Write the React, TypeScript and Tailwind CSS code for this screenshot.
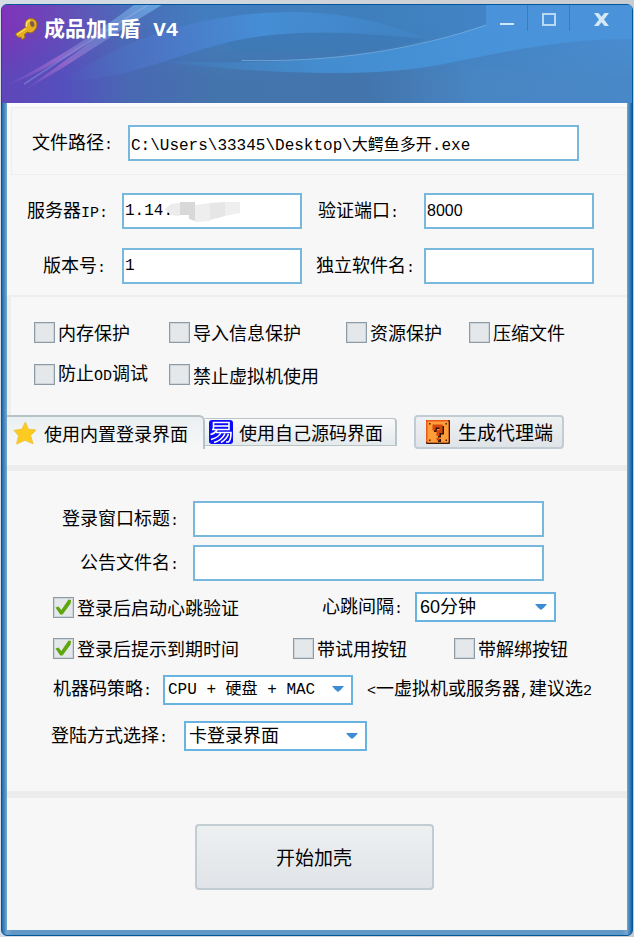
import { useState } from 'react';
import type { ReactNode } from 'react';
import clsx from 'clsx';

// Latin characters sit on a half-width cell next to the 18px Chinese glyphs
function Half({ children }: { children: ReactNode }) {
  return <span className="font-['Liberation_Mono',monospace] text-[15px]">{children}</span>;
}

interface CheckProps {
  children: ReactNode;
  defaultChecked?: boolean;
}

function Check({ children, defaultChecked = false }: CheckProps) {
  const [checked, setChecked] = useState(defaultChecked);
  return (
    <label className="flex items-center gap-[3px] whitespace-nowrap">
      <span className="relative flex shrink-0">
        <input
          type="checkbox"
          checked={checked}
          onChange={(e) => setChecked(e.target.checked)}
          className="size-[21px] appearance-none border border-[#8d9ba6] bg-[#e4e8eb] shadow-[inset_0_0_0_1px_#cdd5db]"
        />
        {checked && (
          <svg viewBox="0 0 21 21" className="pointer-events-none absolute inset-0 size-[21px]">
            <path d="M2.5 10.5 L5.5 9.5 L8.3 13 L15.5 2.5 L18 3 L17.6 6.6 L9.6 17.6 L7.2 17.6 Z" fill="#5fa50d" />
          </svg>
        )}
      </span>
      <span>{children}</span>
    </label>
  );
}

interface FieldProps {
  id: string;
  defaultValue?: string;
  sans?: boolean;
}

function Field({ id, defaultValue, sans }: FieldProps) {
  return (
    <input
      id={id}
      type="text"
      defaultValue={defaultValue}
      className={clsx(
        'h-9 w-full min-w-0 border-2 border-[#79b8dd] bg-white px-px text-base outline-none',
        sans
          ? "font-['Liberation_Sans','Noto_Sans_CJK_SC',sans-serif]"
          : "font-['Liberation_Mono','Noto_Sans_CJK_SC',monospace]",
      )}
    />
  );
}

interface PickerProps {
  id: string;
  options: string[];
  width: string;
  font?: string;
}

function Picker({ id, options, width, font = "font-['Liberation_Sans','Noto_Sans_CJK_SC',sans-serif] text-lg" }: PickerProps) {
  return (
    <div className={clsx('relative', width)}>
      <select
        id={id}
        className={clsx('h-[30px] w-full appearance-none border-2 border-[#68b3df] bg-white pl-[3px] leading-6 outline-none', font)}
      >
        {options.map((option) => (
          <option key={option}>{option}</option>
        ))}
      </select>
      <svg viewBox="0 0 12 6" className="pointer-events-none absolute top-3 right-[9px] h-[6px] w-3">
        <path d="M0 0 H12 L9 3.5 L6 6 L3 3.5 Z" fill="#3d8bd3" />
      </svg>
    </div>
  );
}

function HeaderArt() {
  return (
    <svg viewBox="0 0 631 99" preserveAspectRatio="none" className="absolute inset-0 size-full">
      <defs>
        <linearGradient id="base" x1="0" y1="0" x2="1" y2="0">
          <stop offset="0" stopColor="#8034ba" />
          <stop offset="0.08" stopColor="#6a48b8" />
          <stop offset="0.19" stopColor="#4d6ab8" />
          <stop offset="0.32" stopColor="#427dbf" />
          <stop offset="0.6" stopColor="#3f7fbd" />
          <stop offset="0.8" stopColor="#4385c8" />
          <stop offset="1" stopColor="#4a8fd3" />
        </linearGradient>
        <linearGradient id="low" x1="0" y1="0" x2="1" y2="0">
          <stop offset="0" stopColor="#5f46b9" />
          <stop offset="0.1" stopColor="#5450bd" />
          <stop offset="0.2" stopColor="#4968b3" />
          <stop offset="0.34" stopColor="#4474ac" />
          <stop offset="0.58" stopColor="#4375ac" />
          <stop offset="0.75" stopColor="#4885c3" />
          <stop offset="1" stopColor="#4988c8" />
        </linearGradient>
        <linearGradient id="fade" x1="0" y1="0" x2="0" y2="1">
          <stop offset="0.2" stopColor="#fff" stopOpacity="0" />
          <stop offset="0.75" stopColor="#fff" />
        </linearGradient>
        <mask id="lowMask">
          <rect width="631" height="99" fill="url(#fade)" />
        </mask>
        <linearGradient id="wing" x1="0" y1="0" x2="1" y2="0">
          <stop offset="0" stopColor="#4d6cc6" stopOpacity="0" />
          <stop offset="0.25" stopColor="#4d76c8" stopOpacity="0.8" />
          <stop offset="0.55" stopColor="#4690d8" stopOpacity="0.9" />
          <stop offset="1" stopColor="#4187c9" stopOpacity="0.5" />
        </linearGradient>
        <linearGradient id="wave" x1="0" y1="0" x2="1" y2="0">
          <stop offset="0" stopColor="#438fd2" stopOpacity="0" />
          <stop offset="0.35" stopColor="#438fd2" stopOpacity="0.9" />
          <stop offset="0.75" stopColor="#4893da" />
          <stop offset="1" stopColor="#4a93da" />
        </linearGradient>
        <linearGradient id="ray" x1="0" y1="1" x2="1" y2="0">
          <stop offset="0" stopColor="#a668cf" stopOpacity="0" />
          <stop offset="0.35" stopColor="#a56fd0" stopOpacity="0.7" />
          <stop offset="0.6" stopColor="#7b8fd6" stopOpacity="0.6" />
          <stop offset="1" stopColor="#66a8e0" stopOpacity="0.9" />
        </linearGradient>
      </defs>
      <rect width="631" height="99" fill="url(#base)" />
      <rect width="631" height="99" fill="url(#low)" mask="url(#lowMask)" />
      <path d="M60 78 C110 40 190 8 290 7 C340 7 380 16 425 34 C360 28 290 22 225 38 C170 52 130 74 60 78 Z" fill="url(#wing)" />
      <path d="M225 38 C290 22 360 30 425 34 C370 50 300 54 235 46 Z" fill="#3c79b5" opacity="0.6" />
      <path d="M150 56 C230 60 380 62 486 19 V0 H631 V34 C560 34 500 48 440 60 C370 74 260 70 150 56 Z" fill="url(#wave)" />
      <path d="M240 56 C330 58 410 46 486 20" fill="none" stroke="#7ab5e6" strokeWidth="1" opacity="0.7" />
      <path d="M0 83 C50 58 95 28 132 0 H160 C110 30 70 60 22 86 C50 66 80 44 100 28 C70 50 40 68 0 83 Z" fill="url(#ray)" />
      <path d="M22 80 C70 48 110 22 146 0" fill="none" stroke="#a9b6ea" strokeWidth="1.5" opacity="0.35" />
    </svg>
  );
}

function KeyIcon() {
  return (
    <svg viewBox="0 0 24 24" className="size-6">
      <path
        d="M12 3 C15 0.5 20 1.5 21.5 5 C23 9 20.5 14 17 15.5 C15 16.3 13.5 15.5 12.5 15 L9.5 17.5 L10 20.5 L7.5 22.5 L5.5 20 L4 20.5 L1 18.5 L1 16.5 L10.5 10.5 C9.8 7.5 10 5 12 3 Z"
        fill="#e5ad20"
        stroke="#9c7018"
        strokeWidth="1"
      />
      <path d="M11.5 9.5 C11 6.5 12.5 3.8 15 3.2" fill="none" stroke="#ffe272" strokeWidth="1.6" />
      <ellipse cx="17.2" cy="7" rx="2" ry="3" transform="rotate(-20 17.2 7)" fill="#7b5c50" />
      <path d="M2 17.5 L11 11.5" stroke="#ffdc5a" strokeWidth="1.5" />
    </svg>
  );
}

function StarIcon() {
  return (
    <svg viewBox="0 0 24 24" className="size-6">
      <path
        d="M12.3 1 L15.3 8.2 L23 9 L17.6 14.6 L20 22.8 L12 19.2 L3.6 23 L5.6 14.6 L1 9.4 L9 8.2 Z"
        fill="#fbcb1f"
        stroke="#f3c43c"
        strokeWidth="1"
        strokeLinejoin="round"
      />
    </svg>
  );
}

function YiIcon() {
  return (
    <svg viewBox="0 0 24 24" className="size-6">
      <rect width="24" height="24" rx="3" fill="#0b0bf5" />
      <g fill="none" stroke="#fff" strokeWidth="1.6">
        <path d="M4.5 9.5 V2.5 H20 V9.5 H3" />
        <path d="M5 6 H20" />
        <path d="M8 10 C6.5 12.5 4.5 14 1.5 14.5" />
        <path d="M7 12.5 H22 C22 17 21.5 20 19.5 22 H17" />
        <path d="M12 12.5 C10 16.5 6.5 18.5 2 19.5" />
        <path d="M16 13.5 C14 18 10 21 5 22.5" />
        <path d="M19.5 14 C18 18 15.5 20.5 12 22.5" />
      </g>
    </svg>
  );
}

function QuestionBlockIcon() {
  return (
    <svg viewBox="0 0 24 24" className="size-6">
      <rect width="24" height="24" rx="1" fill="#3a1a08" />
      <rect width="22.5" height="22.5" rx="1" fill="#e8591a" />
      <rect x="1.5" y="1.5" width="21" height="21" fill="#ff9d38" />
      <path d="M3 3h1.5v1.5h-1.5z M19.5 3h1.5v1.5h-1.5z M3 19.5h1.5v1.5h-1.5z M19.5 19.5h1.5v1.5h-1.5z" fill="#4a1d08" />
      <g fill="none" stroke="#30150a" strokeWidth="3">
        <path d="M9.5 12 V7.5 H16.5 V13 H13.5 V17.5" />
        <path d="M13.5 19 V22" />
      </g>
      <g fill="none" stroke="#d4480f" strokeWidth="3">
        <path d="M8 10.5 V6 H15 V11.5 H12 V16" />
        <path d="M12 17.5 V20.5" />
      </g>
    </svg>
  );
}

function TitleBar() {
  return (
    <header className="relative flex h-[98px] items-start justify-between overflow-hidden rounded-t">
      <HeaderArt />
      <div className="relative flex items-center gap-[5px] pt-[6px] pl-[13px] text-white">
        <KeyIcon />
        <h1 className="text-[21px] leading-8 font-bold whitespace-pre">
          成品加<span className="font-['Liberation_Mono',monospace]">E</span>盾
          <span className="font-['Liberation_Mono',monospace]"> V4</span>
        </h1>
      </div>
      <div className="relative flex h-[26px]">
        <button type="button" aria-label="最小化" className="flex w-[42px] justify-center border-r border-[#3b7cbd] bg-[#4a93da] pt-[18px]">
          <span className="h-[2px] w-[14px] bg-[#cfe6f7]" />
        </button>
        <button type="button" aria-label="最大化" className="flex w-[42px] justify-center border-r border-[#3b7cbd] bg-[#4a93da] pt-2">
          <span className="h-[13px] w-[14px] border-2 border-[#b9d8f1]" />
        </button>
        <button type="button" aria-label="关闭" className="flex w-[62px] justify-center bg-[#4a93da] pt-2">
          <svg viewBox="0 0 15 13" className="h-[13px] w-[15px]">
            <path d="M0 0 H4.5 L7.5 3.8 L10.5 0 H15 L10 6.5 L15 13 H10.5 L7.5 9.2 L4.5 13 H0 L5 6.5 Z" fill="#d5e8f7" />
          </svg>
        </button>
      </div>
    </header>
  );
}

function ServerFields() {
  return (
    <section className="grid grid-cols-[115px_18fr_122px_17fr] items-center gap-y-[19px] pt-[18px] pr-[33px] pb-[11px]">
      <label htmlFor="ip" className="pr-[14px] text-right">服务器<Half>IP:</Half></label>
      <div className="relative">
        <Field id="ip" defaultValue="1.14.1" />
        <svg viewBox="0 0 76 22" className="pointer-events-none absolute top-2 left-[43px] h-[22px] w-[76px]">
          <path d="M0 8 L6 3 L15 2 V15 L6 14 Z" fill="#ececec" />
          <path d="M15 1 H30 V20 L24 18 V14 H15 Z" fill="#d8d8d8" />
          <path d="M30 4 L45 2 V20 L30 21 Z" fill="#eeeeee" />
          <path d="M45 2 L60 1 V15 L45 19 Z" fill="#e6e6e6" />
          <path d="M60 1 H75 V12 L60 15 Z" fill="#efefef" />
        </svg>
      </div>
      <label htmlFor="port" className="pl-4">验证端口<Half>:</Half></label>
      <Field id="port" defaultValue="8000" sans />

      <label htmlFor="version" className="pr-4 text-right">版本号<Half>:</Half></label>
      <Field id="version" defaultValue="1" />
      <label htmlFor="soft" className="pl-[14px]">独立软件名<Half>:</Half></label>
      <Field id="soft" />
    </section>
  );
}

function ProtectOptions() {
  return (
    <section className="grid grid-cols-[135px_177px_123px_1fr] gap-y-4 border-t-2 border-l-4 border-[#eeeeee] pt-[23px] pb-[26px] pl-[23px]">
      <Check>内存保护</Check>
      <Check>导入信息保护</Check>
      <Check>资源保护</Check>
      <Check>压缩文件</Check>
      <Check>防止<Half>OD</Half>调试</Check>
      <Check>禁止虚拟机使用</Check>
    </section>
  );
}

function TabBar() {
  return (
    <nav className="flex items-center border-b-[6px] border-[#ececec] pb-4">
      <button
        type="button"
        className="flex h-[34px] w-[198px] items-center gap-[7px] rounded-tr-md border-t-2 border-r-2 border-[#b5c3c6] bg-linear-to-b from-[#eaf0f2] to-[#f7f7f7] pl-[6px]"
      >
        <StarIcon />
        使用内置登录界面
      </button>
      <button
        type="button"
        className="flex h-7 w-[192px] items-center gap-[6px] rounded-tr border-y border-r-2 border-[#b9c4c6] bg-linear-to-b from-[#fafafa] to-[#e4e9ec] pl-1"
      >
        <YiIcon />
        使用自己源码界面
      </button>
      <button
        type="button"
        className="ml-[17px] flex h-[34px] w-[150px] items-center gap-2 rounded border-2 border-[#c1ccd3] bg-linear-to-b from-[#eef1f2] to-[#dfe4e8] pl-[10px] text-[19px]"
      >
        <QuestionBlockIcon />
        生成代理端
      </button>
    </nav>
  );
}

function LoginSettings() {
  return (
    <section className="border-b-[7px] border-[#ececec] pt-[30px] pb-10">
      <div className="grid grid-cols-[186px_1fr] items-center gap-y-2 pr-[83px]">
        <label htmlFor="title" className="pr-[14px] text-right">登录窗口标题<Half>:</Half></label>
        <Field id="title" />
        <label htmlFor="notice" className="pr-[14px] text-right">公告文件名<Half>:</Half></label>
        <Field id="notice" />
      </div>

      <div className="mt-[11px] flex items-center pl-[46px]">
        <div className="w-[269px]">
          <Check defaultChecked>登录后启动心跳验证</Check>
        </div>
        <label htmlFor="beat" className="w-[93px]">心跳间隔<Half>:</Half></label>
        <Picker id="beat" width="w-[141px]" options={['60分钟', '30分钟', '10分钟']} />
      </div>

      <div className="mt-[14px] grid grid-cols-[240px_161px_1fr] pl-[46px]">
        <Check defaultChecked>登录后提示到期时间</Check>
        <Check>带试用按钮</Check>
        <Check>带解绑按钮</Check>
      </div>

      <div className="mt-[14px] flex items-center pl-[46px]">
        <label htmlFor="machine" className="w-[110px]">机器码策略<Half>:</Half></label>
        <Picker
          id="machine"
          width="w-[190px]"
          font="font-['Liberation_Mono','Noto_Sans_CJK_SC',monospace] text-base"
          options={['CPU + 硬盘 + MAC', 'CPU + 硬盘']}
        />
        <p className="pl-[14px] whitespace-nowrap">
          <Half>&lt;</Half>一虚拟机或服务器<Half>,</Half>建议选<Half>2</Half>
        </p>
      </div>

      <div className="mt-4 flex items-center pl-[44px]">
        <label htmlFor="mode" className="w-[133px]">登陆方式选择<Half>:</Half></label>
        <Picker id="mode" width="w-[183px]" options={['卡登录界面', '账号登录界面']} />
      </div>
    </section>
  );
}

export default function App() {
  return (
    <div className="flex min-h-screen flex-col bg-linear-to-r from-[#d6dde6] to-[#c9ccd0] px-px pt-1 pb-[2px] font-['Noto_Sans_CJK_SC',sans-serif] text-lg leading-6 text-black">
      <main className="flex flex-1 flex-col rounded-md border border-[#00579a] bg-[linear-gradient(to_right,#1f6cb0_0,#78a7ce_5px,#6098c8_10px,#6098c8_calc(100%-10px),#78a7ce_calc(100%-5px),#0c61ab_100%)]">
        <TitleBar />
        <div className="mx-[5px] mb-[5px] flex flex-1 flex-col border-t-4 border-[#fbfbfb] bg-[#f7f7f7]">
          <section className="ml-1 flex items-center border-y border-l border-[#eeeeee] pt-[17px] pr-12 pb-[13px] pl-[20px]">
            <label htmlFor="path" className="w-24 shrink-0">文件路径<Half>:</Half></label>
            <Field id="path" defaultValue="C:\Users\33345\Desktop\大鳄鱼多开.exe" />
          </section>
          <ServerFields />
          <ProtectOptions />
          <TabBar />
          <LoginSettings />
          <div className="flex justify-center pt-[26px] pb-10">
            <button
              type="button"
              className="mr-[6px] h-[66px] w-[239px] rounded border-2 border-[#c1ccd3] bg-linear-to-b from-[#edf0f1] to-[#e0e4e8] text-[19px]"
            >
              开始加壳
            </button>
          </div>
        </div>
      </main>
    </div>
  );
}
